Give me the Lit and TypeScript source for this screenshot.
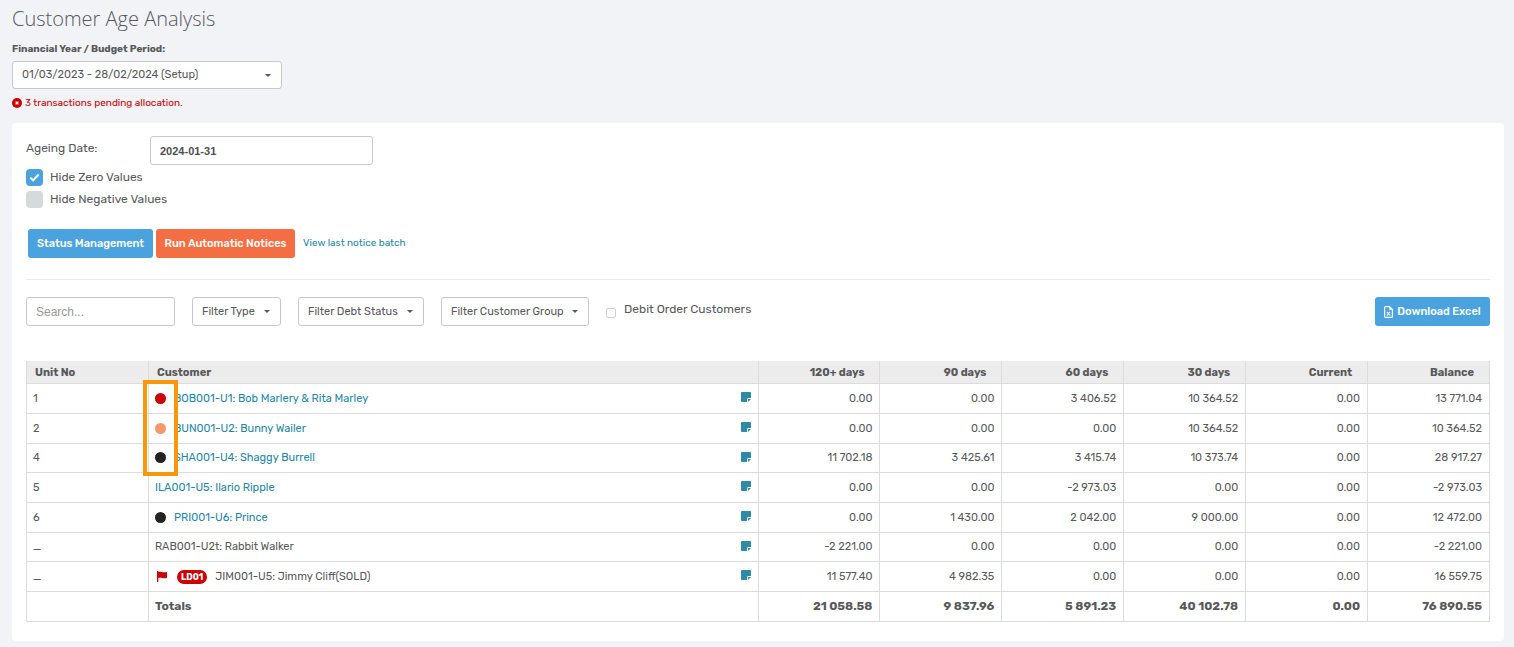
import { LitElement, html, css, svg, nothing } from "lit";
import { customElement } from "lit/decorators.js";
import { classMap } from "lit/directives/class-map.js";

interface Customer {
  unit: string;
  name: string;
  link: boolean;
  status?: "red" | "amber" | "black";
  badge?: string;
  amounts: string[];
}

const COLUMNS = ["120+ days", "90 days", "60 days", "30 days", "Current", "Balance"];

const CUSTOMERS: Customer[] = [
  { unit: "1", name: "BOB001-U1: Bob Marlery & Rita Marley", link: true, status: "red", amounts: ["0.00", "0.00", "3 406.52", "10 364.52", "0.00", "13 771.04"] },
  { unit: "2", name: "BUN001-U2: Bunny Wailer", link: true, status: "amber", amounts: ["0.00", "0.00", "0.00", "10 364.52", "0.00", "10 364.52"] },
  { unit: "4", name: "SHA001-U4: Shaggy Burrell", link: true, status: "black", amounts: ["11 702.18", "3 425.61", "3 415.74", "10 373.74", "0.00", "28 917.27"] },
  { unit: "5", name: "ILA001-U5: Ilario Ripple", link: true, amounts: ["0.00", "0.00", "-2 973.03", "0.00", "0.00", "-2 973.03"] },
  { unit: "6", name: "PRI001-U6: Prince", link: true, status: "black", amounts: ["0.00", "1 430.00", "2 042.00", "9 000.00", "0.00", "12 472.00"] },
  { unit: "_", name: "RAB001-U2t: Rabbit Walker", link: false, amounts: ["-2 221.00", "0.00", "0.00", "0.00", "0.00", "-2 221.00"] },
  { unit: "_", name: "JIM001-U5: Jimmy Cliff(SOLD)", link: false, badge: "LD01", amounts: ["11 577.40", "4 982.35", "0.00", "0.00", "0.00", "16 559.75"] },
];

const TOTALS = ["21 058.58", "9 837.96", "5 891.23", "40 102.78", "0.00", "76 890.55"];

const caret = html`<svg class="caret" width="6" height="3" viewBox="0 0 6 3" aria-hidden="true">${svg`<path d="M0 0h6L3 3z" fill="currentColor"/>`}</svg>`;

@customElement("app-root")
export class AppRoot extends LitElement {
  static styles = css`
    :host {
      display: block;
      box-sizing: border-box;
      min-height: 100vh;
      padding: 6px 10px 6px 12px;
      background: #f1f3f7;
      color: #58595b;
      font: 400 11px/16px Rubik, Roboto, sans-serif;
    }
    * { box-sizing: border-box; }
    svg { display: block; flex: none; }
    a { color: #2487a6; text-decoration: none; }
    button, input, select { font: inherit; color: inherit; margin: 0; }
    h1 {
      margin: 0;
      font: 300 20px/26px "Open Sans", sans-serif;
      color: #55585c;
    }
    .period-label { display: block; margin-top: 9px; font-size: 10px; font-weight: 700; line-height: 16px; }
    .picker { display: grid; align-items: center; }
    .picker > * { grid-area: 1 / 1; }
    .picker select {
      appearance: none;
      width: 100%;
      height: 29px;
      padding: 0 20px 0 9px;
      border: 1px solid #c8c9cb;
      border-radius: 3px;
      background: #fff;
    }
    .caret { justify-self: end; margin-right: 11px; pointer-events: none; }
    .period { width: 270px; margin-top: 4px; }
    .period select { height: 28px; }
    .alert { display: flex; align-items: center; gap: 3px; margin: 6px 0 12px; color: #cc0000; font-size: 10px; line-height: 16px; }
    .card { padding: 13px 14px 19px; border-radius: 4px; background: #fff; }
    .ageing { display: flex; align-items: flex-start; font-size: 12px; }
    .ageing label { width: 124px; padding-top: 4px; }
    .text {
      height: 29px;
      padding: 1px 9px 0;
      border: 1px solid #c8c9cb;
      border-radius: 3px;
      background: #fff;
    }
    .ageing .text { width: 223px; font: 700 11px "Liberation Sans", Arial, sans-serif; color: #4d4f52; }
    .check { display: flex; align-items: center; gap: 7px; width: max-content; height: 22px; font-size: 12px; }
    .options { padding-top: 1px; }
    .box { display: grid; align-items: center; justify-items: center; }
    .box > * { grid-area: 1 / 1; }
    .box input { appearance: none; width: 17px; height: 17px; border-radius: 4px; background: #d5dadd; }
    .box input:checked { background: #4aa3df; }
    .box svg { pointer-events: none; }
    .actions { display: flex; align-items: center; gap: 3px; margin-top: 19px; padding-left: 2px; }
    .btn {
      display: flex;
      align-items: center;
      justify-content: center;
      gap: 4px;
      height: 29px;
      padding: 0 9px;
      border: 0;
      border-radius: 3px;
      background: #4aa3df;
      color: #fff;
      font-weight: 500;
      white-space: nowrap;
    }
    .btn.status { width: 125px; }
    .btn.notices { width: 139px; background: #f36f43; }
    .btn.excel { width: 115px; margin-left: auto; }
    .actions a { margin-left: 5px; padding-bottom: 2px; font-size: 10px; }
    hr { height: 1px; margin: 21px 0 17px; border: 0; background: #e9eaeb; }
    .filters { display: flex; gap: 17px; }
    .search { width: 149px; font: 12px "Liberation Sans", Arial, sans-serif; }
    .search::placeholder { color: #999; opacity: 1; }
    .type { width: 89px; }
    .debt { width: 126px; }
    .group { width: 148px; }
    .debit { display: flex; align-items: flex-start; gap: 8px; padding-top: 4px; font-size: 12px; }
    .debit input { appearance: none; width: 10px; height: 10px; margin-top: 7px; border: 1px solid #d0d0d0; border-radius: 2px; background: #fff; }
    .table-wrap { position: relative; margin-top: 35px; }
    table { width: 100%; table-layout: fixed; border-collapse: collapse; }
    th, td { height: 30px; padding: 1px 7px 0 6px; border: 1px solid #dcdcdc; text-align: left; }
    tbody tr:nth-child(3n) td { height: 29px; }
    th.unit, th.amount { width: 8.333%; }
    thead th { height: 22px; padding: 3px 8px 0; border-top: 0; background: #ececec; font-weight: 700; }
    .amount { text-align: right; white-space: nowrap; }
    thead .amount { padding-right: 15px; }
    tfoot td, tfoot th { padding-top: 0; font-size: 12px; font-weight: 700; }
    .customer { display: flex; align-items: center; }
    .dot { width: 11px; height: 11px; margin: 0 8px 1px 0; border-radius: 50%; }
    .red { background: #cc0000; }
    .amber { background: #f79868; }
    .black { background: #222222; }
    .badge { margin: 0 8px 0 9px; padding: 0 4px; border-radius: 7px; background: #cc0000; color: #fff; font-size: 9px; line-height: 14px; font-weight: 700; }
    .note { margin: 0 0 3px auto; padding: 0; border: 0; background: none; color: #2f8aa8; }
    .highlight {
      position: absolute;
      top: 19px;
      left: 117px;
      width: 35px;
      height: 96px;
      border: 4px solid #f79709;
      pointer-events: none;
    }
  `;

  private picker(id: string, kind: string, text: string, label = text) {
    return html`<div class="picker ${kind}">
      <select id=${id} aria-label=${label}><option>${text}</option></select>${caret}
    </div>`;
  }

  private customerCell(c: Customer) {
    return html`<div class="customer">
      ${c.status ? html`<span class=${classMap({ dot: true, [c.status]: true })}></span>` : nothing}
      ${c.badge
        ? html`<svg width="13" height="11" viewBox="0 0 13 11" aria-hidden="true"><path d="M2 0h1.300v11H2zM3 1c3-1 4 1 9 0v6c-4 1-5-1-9 0z" fill="#cc0000"/></svg>
            <span class="badge">${c.badge}</span>`
        : nothing}
      ${c.link ? html`<a href="#">${c.name}</a>` : html`<span>${c.name}</span>`}
      <button class="note" aria-label="Notes for ${c.name}">
        <svg width="10" height="10" viewBox="0 0 10 10"><path d="M1 0h8a1 1 0 0 1 1 1v5H7.4A1.400 1.400 0 0 0 6 7.400V10H1a1 1 0 0 1-1-1V1a1 1 0 0 1 1-1zM7.200 7H10L7 10V7.200z" fill="currentColor"/></svg>
      </button>
    </div>`;
  }

  render() {
    return html`
      <h1>Customer Age Analysis</h1>
      <label class="period-label" for="period">Financial Year / Budget Period:</label>
      ${this.picker("period", "period", "01/03/2023 - 28/02/2024 (Setup)", "Financial Year / Budget Period")}
      <div class="alert">
        <svg width="10" height="10" viewBox="0 0 10 10" aria-hidden="true"><circle cx="5" cy="5" r="5" fill="currentColor"/><path d="M3.6 3.6l2.8 2.8M6.4 3.6L3.6 6.4" stroke="#fff" stroke-width="1.3"/></svg>
        3 transactions pending allocation.
      </div>
      <main class="card">
        <div class="ageing">
          <label for="date">Ageing Date:</label>
          <input class="text" id="date" type="text" value="2024-01-31" />
        </div>
        <div class="options">
          <label class="check"><span class="box"><input type="checkbox" checked /><svg width="11" height="9" viewBox="0 0 11 9"><path d="M1.3 4.6l2.8 2.7L9.7 1.5" fill="none" stroke="#fff" stroke-width="2"/></svg></span>Hide Zero Values</label>
          <label class="check"><span class="box"><input type="checkbox" /></span>Hide Negative Values</label>
        </div>
        <div class="actions">
          <button class="btn status">Status Management</button>
          <button class="btn notices">Run Automatic Notices</button>
          <a href="#">View last notice batch</a>
        </div>
        <hr />
        <div class="filters">
          <input class="text search" type="search" placeholder="Search..." aria-label="Search" />
          ${this.picker("type", "type", "Filter Type")}
          ${this.picker("debt", "debt", "Filter Debt Status")}
          ${this.picker("group", "group", "Filter Customer Group")}
          <label class="debit"><input type="checkbox" />Debit Order Customers</label>
          <button class="btn excel">
            <svg width="9" height="12" viewBox="0 0 9 12" aria-hidden="true"><path d="M1.500.6h4L8.400 3.500v7a.9.9 0 0 1-.9.9h-6a.9.9 0 0 1-.9-.9v-9a.9.9 0 0 1 .9-.9z" fill="none" stroke="#fff" stroke-width="1.200"/><path d="M5.200.6v3.200h3.200z" fill="#fff"/><path d="M3 5.800l3 3.600M6 5.800L3 9.400" stroke="#fff" stroke-width="1.100"/></svg>
            Download Excel
          </button>
        </div>
        <div class="table-wrap">
          <table>
            <thead>
              <tr>
                <th class="unit">Unit No</th>
                <th>Customer</th>
                ${COLUMNS.map((c) => html`<th class="amount">${c}</th>`)}
              </tr>
            </thead>
            <tbody>
              ${CUSTOMERS.map((c) => html`<tr>
                <td>${c.unit}</td>
                <td>${this.customerCell(c)}</td>
                ${c.amounts.map((a) => html`<td class="amount">${a}</td>`)}
              </tr>`)}
            </tbody>
            <tfoot>
              <tr>
                <td></td>
                <th>Totals</th>
                ${TOTALS.map((t) => html`<td class="amount">${t}</td>`)}
              </tr>
            </tfoot>
          </table>
          <div class="highlight"></div>
        </div>
      </main>
    `;
  }
}
